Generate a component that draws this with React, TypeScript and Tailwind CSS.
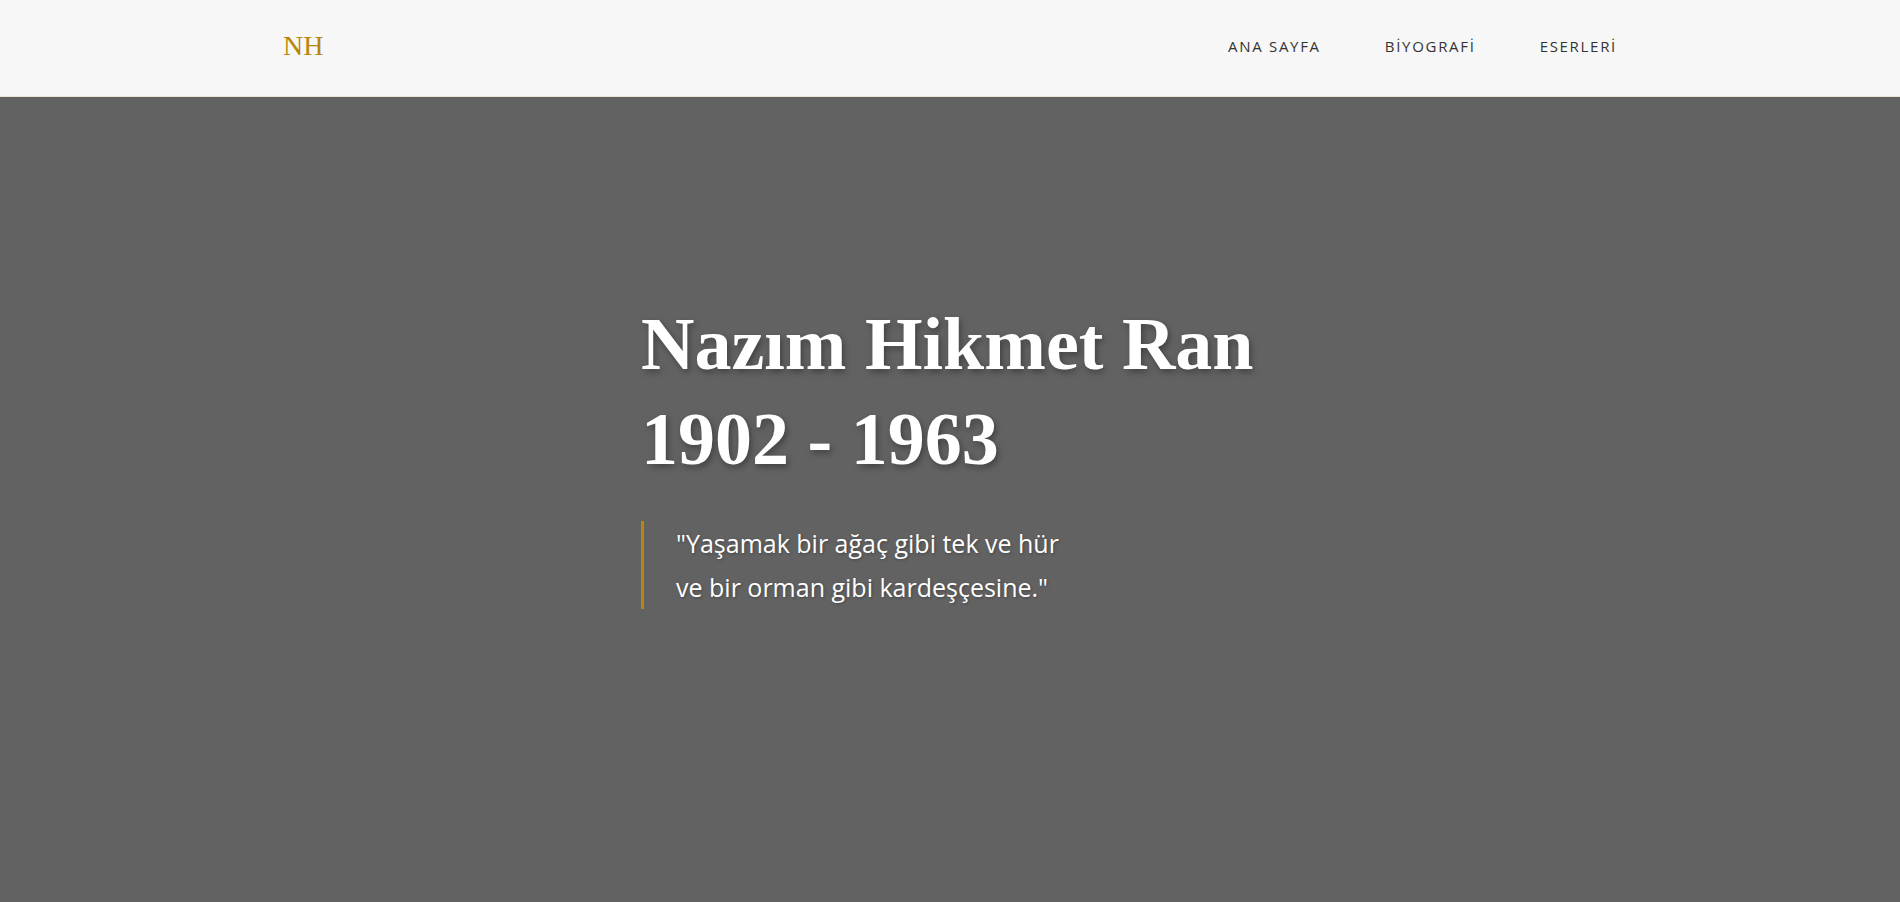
import React from 'react';

const navLinks = ['ANA SAYFA', 'BİYOGRAFİ', 'ESERLERİ'];

export default function App() {
  return (
    <div className="min-h-screen bg-[#626262]">
      <header className="h-[97px] bg-[#f7f7f7] border-b border-[#e9e3cf]">
        <div className="mx-auto flex h-full w-[1334px] items-center justify-between pb-[4px]">
          <a
            href="#"
            className="text-[28px] leading-none text-[#b8860b]"
            style={{ fontFamily: '"Liberation Serif", serif' }}
          >
            NH
          </a>
          <nav className="flex items-center gap-[64px]">
            {navLinks.map((link) => (
              <a
                key={link}
                href="#"
                className="text-[15px] font-medium tracking-[1.7px] text-[#333333]"
                style={{ fontFamily: '"Open Sans", sans-serif' }}
              >
                {link}
              </a>
            ))}
          </nav>
        </div>
      </header>

      <main className="flex justify-center pt-[200px]">
        <div className="w-[618px]">
          <h1
            className="whitespace-nowrap text-[74px] font-bold leading-[95px] text-white [text-shadow:2px_3px_6px_rgba(0,0,0,0.35)]"
            style={{ fontFamily: '"Liberation Serif", serif' }}
          >
            Nazım Hikmet Ran
            <br />
            1902 - 1963
          </h1>
          <blockquote
            className="mt-[34px] border-l-[3px] border-[#b8860b] pl-[32px] text-[25px] leading-[44px] text-white [text-shadow:1px_1px_3px_rgba(0,0,0,0.3)]"
            style={{ fontFamily: '"Open Sans", sans-serif' }}
          >
            "Yaşamak bir ağaç gibi tek ve hür
            <br />
            ve bir orman gibi kardeşçesine."
          </blockquote>
        </div>
      </main>
    </div>
  );
}
